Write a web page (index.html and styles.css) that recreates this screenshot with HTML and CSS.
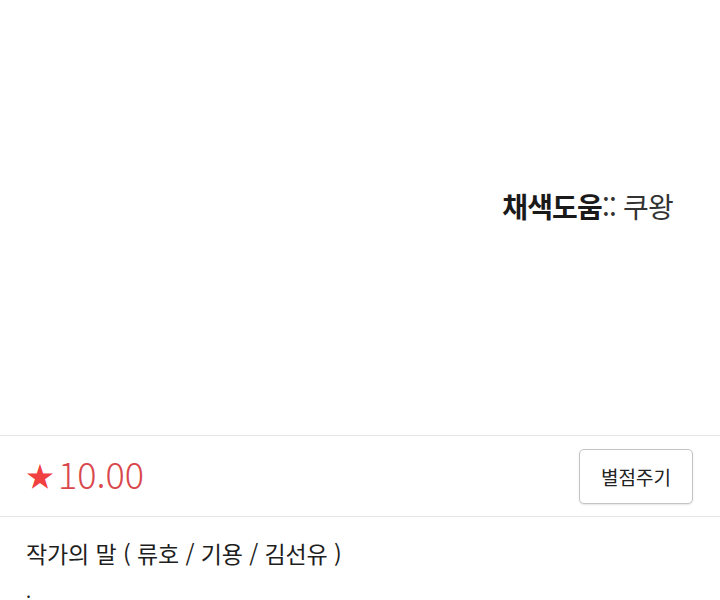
FILE: index.html
```html
<!DOCTYPE html>
<html lang="ko">
<head>
  <meta charset="UTF-8">
  <meta name="viewport" content="width=device-width, initial-scale=1.0">
  <title>웹툰 뷰어</title>
  <link rel="stylesheet" href="styles.css">
</head>
<body>
  <section class="panel">
    <p class="credit"><strong>채색도움</strong>:: 쿠왕</p>
  </section>

  <section class="rating">
    <div class="score">
      <span class="star">★</span>
      <span class="value">10.00</span>
    </div>
    <button type="button" class="rate-btn">별점주기</button>
  </section>

  <section class="author">
    <h3>작가의 말 ( 류호 / 기용 / 김선유 )</h3>
    <p>.</p>
  </section>
</body>
</html>
```

FILE: styles.css
```css
*{margin:0;padding:0;box-sizing:border-box;}
body{font-family:"Noto Sans CJK KR","Noto Sans",sans-serif;color:#222;background:#fff;}
.panel{height:435px;display:flex;justify-content:flex-end;padding:186px 47px 0 0;}
.credit{font-size:28px;line-height:40px;color:#333;font-weight:400;letter-spacing:-0.8px;}
.credit strong{font-weight:700;color:#1a1a1a;}
.rating{height:82px;border-top:1px solid #e6e6e6;border-bottom:1px solid #e6e6e6;display:flex;align-items:center;justify-content:space-between;padding:0 27px 0 26px;}
.score{display:flex;align-items:center;gap:4px;padding-bottom:6px;}
.star{color:#f0403f;font-size:28px;line-height:1;padding-top:4px;}
.value{color:#d9484c;font-size:36px;line-height:1;font-weight:300;}
.rate-btn{width:114px;height:55px;background:#fff;border:1px solid #c4c4c4;border-radius:5px;font-family:inherit;font-size:19px;color:#222;box-shadow:0 1px 2px rgba(0,0,0,0.1);}
.author{padding:19px 26px 0;}
.author h3{font-size:23px;font-weight:400;line-height:34px;color:#1e1e1e;letter-spacing:-0.1px;}
.author p{font-size:18px;line-height:28px;margin-top:6px;}
```
